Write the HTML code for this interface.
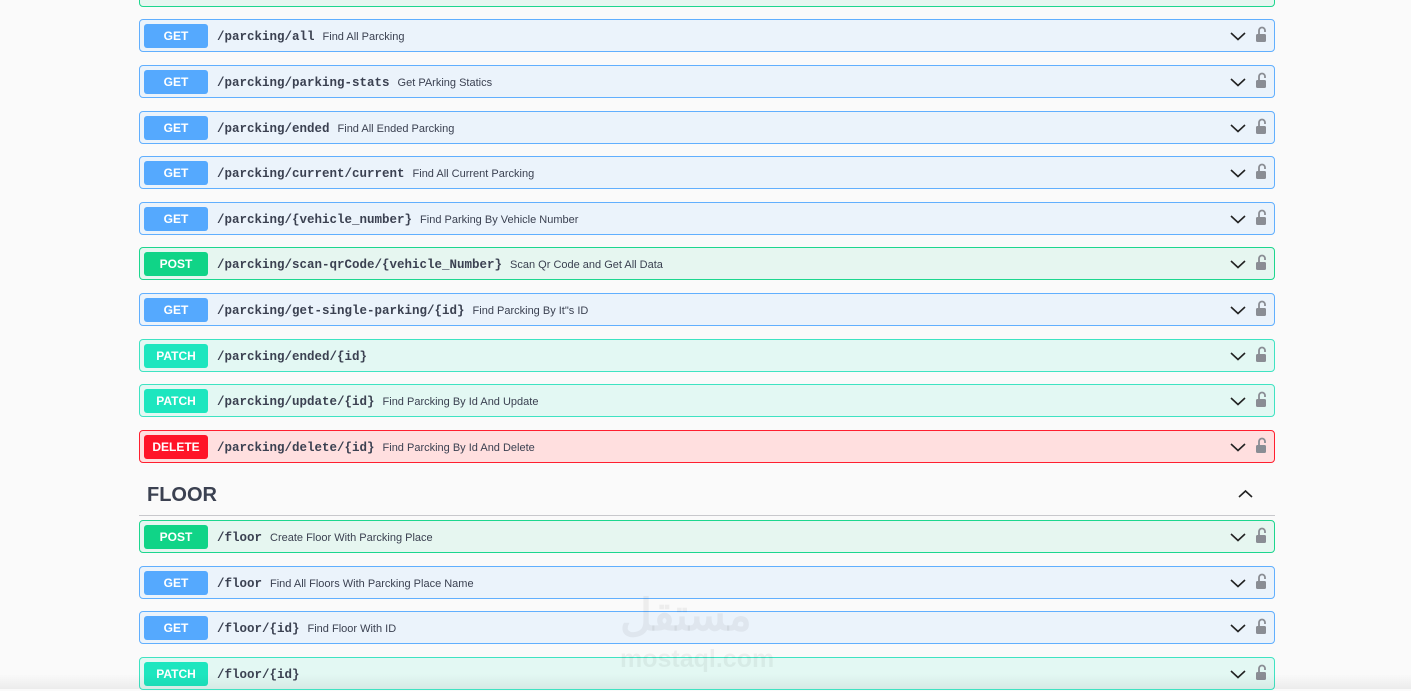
<!DOCTYPE html><html><head><style>
body{margin:0;width:1411px;height:689px;background:#fafafa;position:relative;overflow:hidden;font-family:"Liberation Sans",sans-serif}
.r{position:absolute;left:139px;width:1134px;height:31px;border:1px solid;border-radius:4px;box-sizing:content-box}
.b{position:absolute;left:4px;top:4px;width:64px;height:24px;border-radius:3px;color:#fff;font-weight:bold;font-size:12px;line-height:24px;text-align:center}
.p{position:absolute;left:77px;top:1px;line-height:32px;font-family:"Liberation Mono",monospace;font-weight:bold;font-size:12.5px;color:#3b4151;white-space:nowrap}
.p span{font-family:"Liberation Sans",sans-serif;font-weight:normal;font-size:11px;margin-left:8px}
.c{position:absolute;right:28px;top:11px}
.l{position:absolute;right:6px;top:6px}
.g{background:#ebf3fb;border-color:#61affe}.g .b{background:#55a9fe}
.o{background:#e6f6f0;border-color:#1dd68e}.o .b{background:#10d487}
.t{background:#e3f8f3;border-color:#3fe3c2}.t .b{background:#1de6bf}
.d{background:#ffdfdf;border-color:#ff1f2f}.d .b{background:#ff1428}
</style></head><body>
<div class="r o" style="top:-26px"></div>
<div id="rows"></div>
<div style="position:absolute;left:147px;top:484px;font-size:20px;font-weight:bold;color:#3b4151">FLOOR</div>
<svg style="position:absolute;left:1238px;top:489px" width="15" height="10"><path d="M1 8 L7.5 2 L14 8" fill="none" stroke="#222" stroke-width="1.6"/></svg>
<div style="position:absolute;left:139px;top:515px;width:1136px;height:1px;background:#c8c8cc"></div>
<div style="position:absolute;left:620px;top:590px;font-size:44px;font-weight:bold;color:rgba(0,0,0,0.05)">مستقل</div>
<div style="position:absolute;left:620px;top:645px;font-size:25px;font-weight:bold;color:rgba(0,0,0,0.05)">mostaql.com</div>
<div style="position:absolute;left:0;top:674px;width:1411px;height:15px;background:linear-gradient(rgba(0,0,0,0),rgba(0,0,0,0.06))"></div>
<script>
const R=[[19,'g','GET','/parcking/all','Find All Parcking'],[65,'g','GET','/parcking/parking-stats','Get PArking Statics'],[111,'g','GET','/parcking/ended','Find All Ended Parcking'],[156,'g','GET','/parcking/current/current','Find All Current Parcking'],[202,'g','GET','/parcking/{vehicle_number}','Find Parking By Vehicle Number'],[247,'o','POST','/parcking/scan-qrCode/{vehicle_Number}','Scan Qr Code and Get All Data'],[293,'g','GET','/parcking/get-single-parking/{id}','Find Parcking By It"s ID'],[339,'t','PATCH','/parcking/ended/{id}',''],[384,'t','PATCH','/parcking/update/{id}','Find Parcking By Id And Update'],[430,'d','DELETE','/parcking/delete/{id}','Find Parcking By Id And Delete'],[520,'o','POST','/floor','Create Floor With Parcking Place'],[566,'g','GET','/floor','Find All Floors With Parcking Place Name'],[611,'g','GET','/floor/{id}','Find Floor With ID'],[657,'t','PATCH','/floor/{id}','']];
let h='';for(const[y,c,m,p,d]of R){h+=`<div class="r ${c}" style="top:${y}px"><div class="b">${m}</div><div class="p">${p}<span>${d}</span></div><svg class="c" width="16" height="10"><path d="M1 2 L8 8.5 L15 2" fill="none" stroke="#222" stroke-width="1.6"/></svg><svg class="l" width="13" height="17"><path d="M4 8 V4.5 a3 3 0 0 1 6 0 V6" fill="none" stroke="#8a8d94" stroke-width="1.8"/><rect x="1" y="8" width="10" height="8" rx="1.5" fill="#8a8d94"/></svg></div>`}
document.getElementById('rows').outerHTML=h;
</script>
</body></html>
